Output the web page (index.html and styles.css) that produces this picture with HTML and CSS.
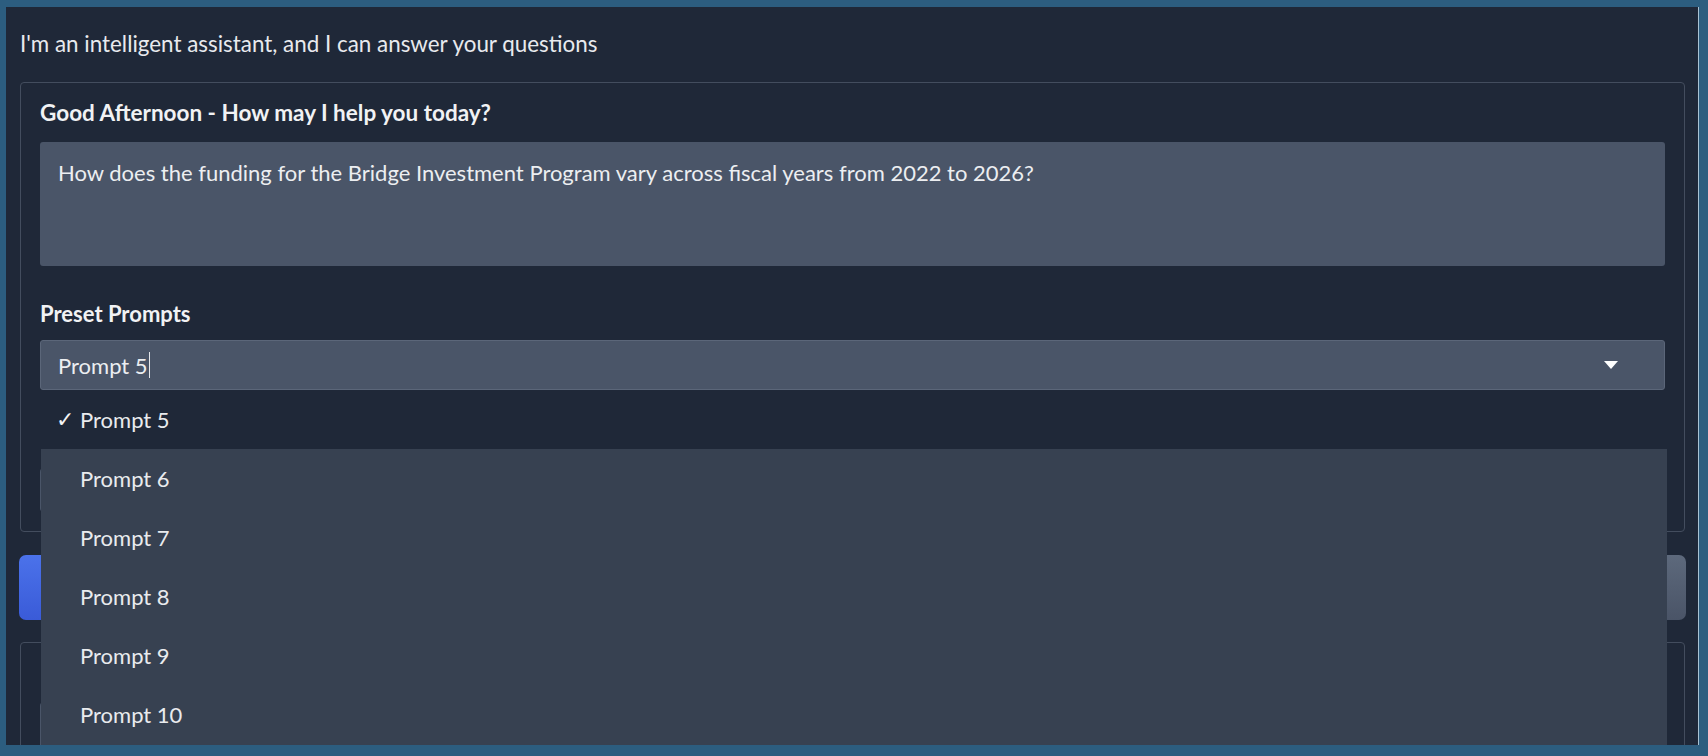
FILE: index.html
```html
<!DOCTYPE html>
<html lang="en">
<head>
<meta charset="utf-8">
<title>Assistant</title>
<link rel="stylesheet" href="styles.css">
</head>
<body>
<div class="app">
  <p class="intro">I'm an intelligent assistant, and I can answer your questions</p>
  <section class="card">
    <h2 class="label">Good Afternoon - How may I help you today?</h2>
    <div class="textarea">How does the funding for the Bridge Investment Program vary across fiscal years from 2022 to 2026?</div>
    <h2 class="label preset">Preset Prompts</h2>
    <div class="select">
      <div class="select-input">
        <span class="value">Prompt 5</span><span class="caret"></span>
        <svg class="arrow" width="14" height="8" viewBox="0 0 14 8"><path d="M0 0 L14 0 L7 8 Z" fill="#ffffff"/></svg>
      </div>
      <ul class="menu">
        <li class="item selected"><span class="check">✓</span><span>Prompt 5</span></li>
        <li class="item"><span class="check"></span><span>Prompt 6</span></li>
        <li class="item"><span class="check"></span><span>Prompt 7</span></li>
        <li class="item"><span class="check"></span><span>Prompt 8</span></li>
        <li class="item"><span class="check"></span><span>Prompt 9</span></li>
        <li class="item"><span class="check"></span><span>Prompt 10</span></li>
      </ul>
    </div>
    <div class="option-row"></div>
  </section>
  <div class="actions">
    <button class="btn primary" aria-label="Submit"></button>
    <button class="btn secondary" aria-label="Clear"></button>
  </div>
  <section class="card card2">
    <div class="inner-field"></div>
  </section>
</div>
</body>
</html>
```

FILE: styles.css
```css
* { box-sizing: border-box; }

html, body {
  margin: 0;
  height: 100%;
}

body {
  background: #2c5d7f;
  padding: 7px 9px 11px 6px;
  font-family: "Lato", "Open Sans", "DejaVu Sans", sans-serif;
  color: #e5e7eb;
}

.app {
  height: 738px;
  background: #1f2838;
  border-right: 1px solid #a9c3d4;
  padding: 0 13px 0 14px;
  overflow: hidden;
}

.intro {
  margin: 0;
  padding-top: 22px;
  font-size: 22.4px;
  line-height: 30px;
  color: #e8eaee;
}

.card {
  margin-top: 23px;
  border: 1px solid #434d5e;
  border-radius: 4px;
  padding: 15px 19px 19px 19px;
}

.label {
  margin: 0 0 14px 0;
  font-size: 22.5px;
  line-height: 30px;
  font-weight: 700;
  color: #f1f2f4;
}

.label.preset {
  margin-top: 33px;
  margin-bottom: 11px;
  font-size: 22px;
}

.textarea {
  height: 124px;
  background: #4a5568;
  border-radius: 3px;
  padding: 16px 18px;
  font-size: 22px;
  line-height: 30px;
  color: #eceef1;
}

.select {
  position: relative;
}

.select-input {
  height: 50px;
  background: #4a5568;
  border: 1px solid #5b6679;
  border-radius: 3px;
  display: flex;
  align-items: center;
  padding-left: 17px;
  padding-right: 46px;
  font-size: 22px;
  color: #eceef1;
}

.caret {
  display: inline-block;
  width: 1px;
  height: 26px;
  background: #e5e7eb;
  margin-left: 1px;
}

.arrow {
  margin-left: auto;
}

.menu {
  position: absolute;
  top: 100%;
  left: 1px;
  right: -2px;
  margin: 0;
  padding: 0;
  list-style: none;
  background: #374151;
  z-index: 10;
  min-height: 360px;
}

.item {
  height: 59px;
  display: flex;
  align-items: center;
  padding-left: 15px;
  font-size: 22px;
  color: #e9ebee;
  background: #374151;
}

.item.selected {
  background: #1f2838;
}

.check {
  width: 24px;
  font-family: "DejaVu Sans", sans-serif;
  font-size: 22px;
  font-weight: 700;
  color: #f3f4f6;
}

.option-row {
  margin-top: 78px;
  height: 44px;
  background: #4a5568;
  border-radius: 4px;
}

.actions {
  margin-top: 23px;
  display: flex;
  gap: 20px;
  margin-right: -1px;
  margin-left: -1px;
}

.btn {
  flex: 1;
  height: 65px;
  border: none;
  border-radius: 7px;
}

.btn.primary {
  background: linear-gradient(#4b72ea, #3a5bd8);
}

.btn.secondary {
  background: linear-gradient(#5d697c, #4a5467);
}

.card2 {
  margin-top: 22px;
  height: 200px;
  padding-top: 59px;
}

.inner-field {
  height: 100px;
  background: #4a5568;
  border-radius: 4px;
}
```
